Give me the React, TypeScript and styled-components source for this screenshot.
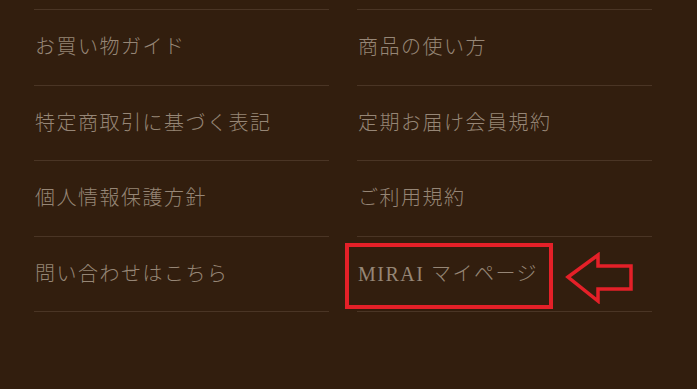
import React from 'react';
import styled, {createGlobalStyle} from "styled-components";

const GlobalStyle = createGlobalStyle`
    html, body {
        margin: 0;
        padding: 0;
        height: 100%;
        background: #321e0e;
    }
    body {
        font-family: "Liberation Serif", "Noto Sans CJK JP", serif;
    }
`

type LinkItem = {
    label: string
    marked?: boolean
}

const links: LinkItem[] = [
    {label: "お買い物ガイド"},
    {label: "商品の使い方"},
    {label: "特定商取引に基づく表記"},
    {label: "定期お届け会員規約"},
    {label: "個人情報保護方針"},
    {label: "ご利用規約"},
    {label: "問い合わせはこちら"},
    {label: "MIRAI マイページ", marked: true},
]

const Arrow = () => (
    <ArrowSvg width="70" height="52" viewBox="0 0 70 52">
        <polygon
            points="3,25 33,3 33,14 66,14 66,37 33,37 33,49"
            fill="none"
            stroke="#e42028"
            strokeWidth="3.5"
            strokeLinejoin="miter"
        />
    </ArrowSvg>
)

export default function App() {
    return (
        <>
            <GlobalStyle/>
            <StyledFooter>
                <LinkGrid>
                    {links.map((item) => (
                        <Item key={item.label}>
                            <ItemLink href="#">{item.label}</ItemLink>
                            {item.marked && (
                                <>
                                    <Highlight/>
                                    <Arrow/>
                                </>
                            )}
                        </Item>
                    ))}
                </LinkGrid>
            </StyledFooter>
        </>
    );
}

const StyledFooter = styled.footer`
    padding: 9px 45px 0 34px;
    min-height: 380px;
`

const LinkGrid = styled.ul`
    list-style: none;
    margin: 0;
    padding: 0;
    display: grid;
    grid-template-columns: 295px 295px;
    column-gap: 28px;
`

const Item = styled.li`
    position: relative;
    height: 74.5px;
    border-top: 1px solid #4a3525;
    display: flex;
    align-items: center;

    &:nth-last-child(-n + 2) {
        border-bottom: 1px solid #4a3525;
    }
`

const ItemLink = styled.a`
    color: #968676;
    text-decoration: none;
    font-size: 20px;
    font-weight: 300;
    letter-spacing: 1.5px;
    line-height: 1;
    padding-left: 1px;
`

const Highlight = styled.span`
    position: absolute;
    left: -12px;
    top: 6px;
    width: 200px;
    height: 58px;
    border: 4px solid #e42028;
`

const ArrowSvg = styled.svg`
    position: absolute;
    left: 208px;
    top: 15px;
`
